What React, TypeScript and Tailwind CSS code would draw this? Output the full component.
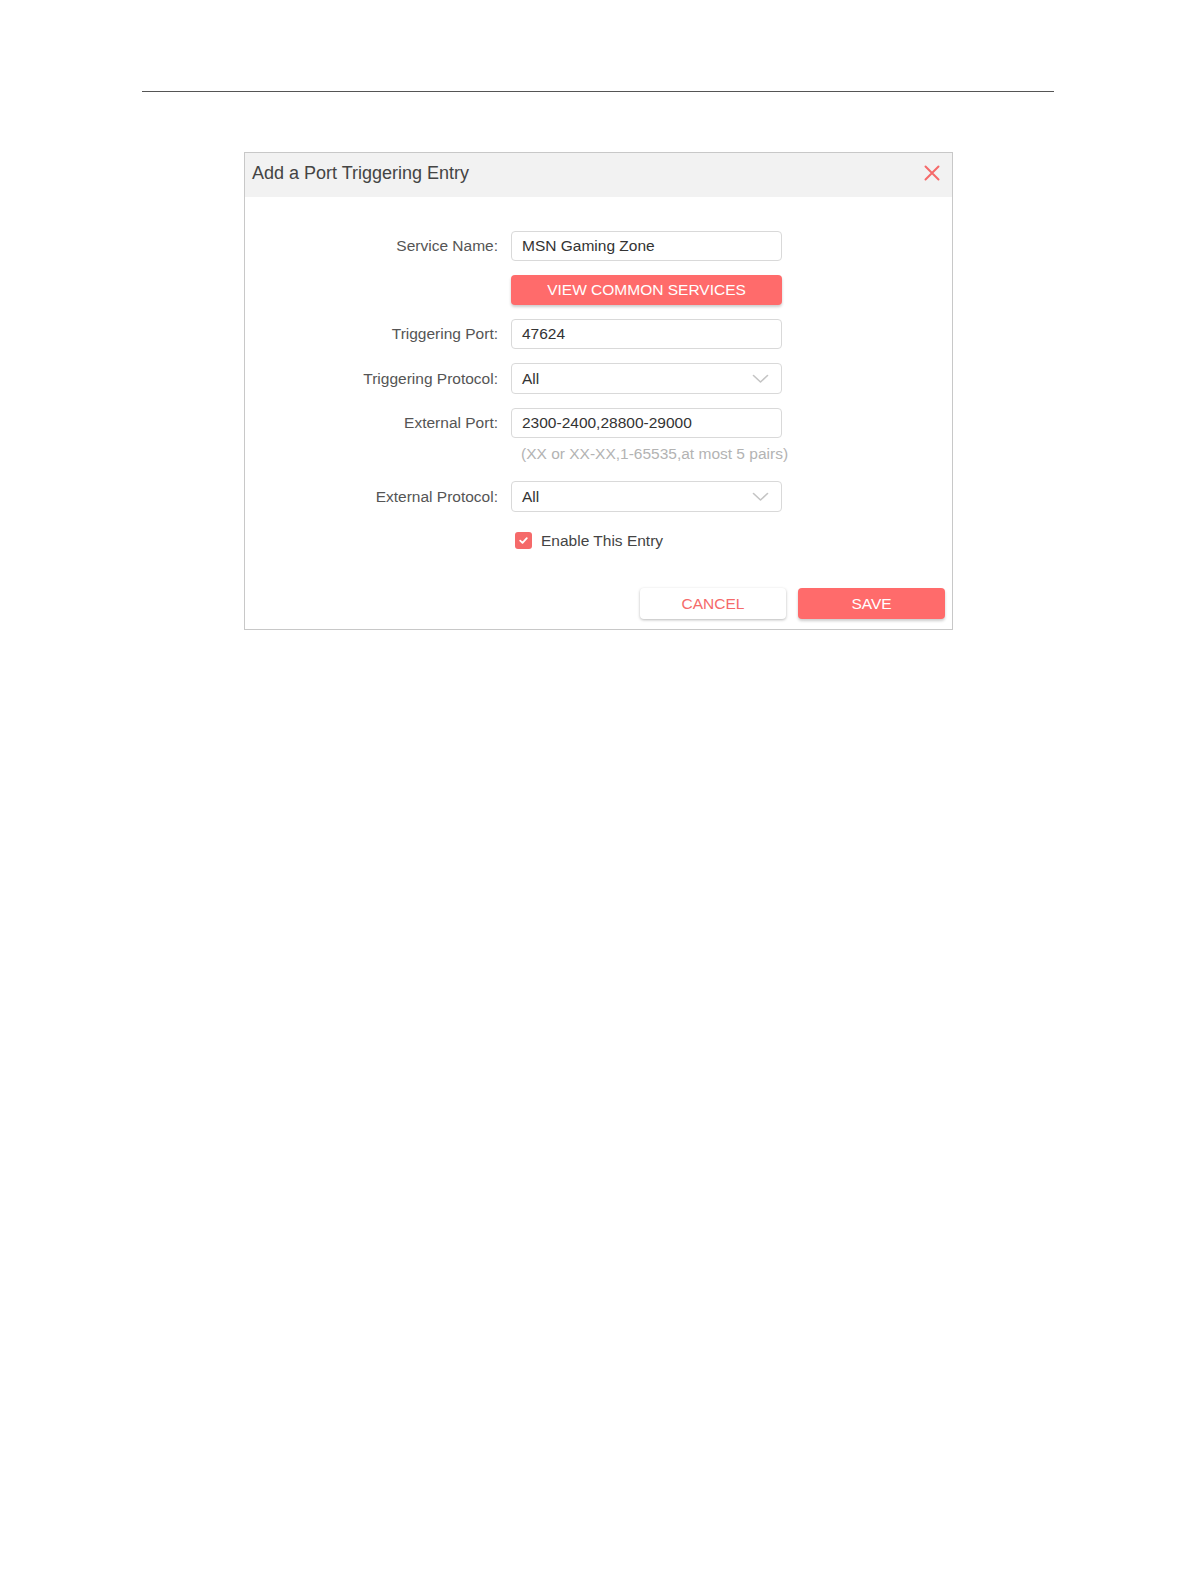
import React from "react";

const font = { fontFamily: '"Liberation Sans", Arial, sans-serif' };

function Chevron() {
  return (
    <svg width="17" height="10" viewBox="0 0 17 10" fill="none" className="shrink-0">
      <path d="M1.5 1.5 L8.5 8 L15.5 1.5" stroke="#c4c4c4" strokeWidth="1.6" strokeLinecap="round" strokeLinejoin="round" />
    </svg>
  );
}

function Row({ label, children }: { label?: string; children: React.ReactNode }) {
  return (
    <div className="flex items-center">
      <div className="w-[266px] shrink-0 pr-[13px] text-right text-[15.5px] text-[#555]">{label}</div>
      <div className="w-[271px]">{children}</div>
    </div>
  );
}

function TextBox({ value }: { value: string }) {
  return (
    <div className="flex h-[30px] items-center rounded-[4px] border border-[#d9d9d9] bg-white px-[10px] text-[15.5px] text-[#333]">
      {value}
    </div>
  );
}

function SelectBox({ value }: { value: string }) {
  return (
    <div className="flex h-[31px] items-center justify-between rounded-[4px] border border-[#d9d9d9] bg-white pl-[10px] pr-[12px] text-[15.5px] text-[#333]">
      <span>{value}</span>
      <Chevron />
    </div>
  );
}

export default function App() {
  return (
    <div className="min-h-[1582px] bg-white" style={font}>
      <div className="pt-[91px]">
        <div className="ml-[142px] h-px w-[912px] bg-[#555]" />
      </div>

      <div className="ml-[244px] mt-[60px] w-[709px] border border-[#c8c8c8] bg-white">
        <div className="flex h-[44px] items-center justify-between bg-[#f2f2f2] pb-[4px] pl-[7px] pr-[12px]">
          <span className="text-[18px] text-[#444]">Add a Port Triggering Entry</span>
          <svg width="16" height="16" viewBox="0 0 16 16">
            <path d="M1.5 1.5 L14.5 14.5 M14.5 1.5 L1.5 14.5" stroke="#f56a6a" strokeWidth="2" strokeLinecap="round" />
          </svg>
        </div>

        <div className="pt-[34px]">
          <div className="flex flex-col gap-[14px]">
            <Row label="Service Name:">
              <TextBox value="MSN Gaming Zone" />
            </Row>
            <Row>
              <button className="flex h-[30px] w-full items-center justify-center rounded-[4px] bg-[#ff6b6b] text-[15.5px] text-white shadow-[0_2px_3px_rgba(0,0,0,0.2)]">
                VIEW COMMON SERVICES
              </button>
            </Row>
            <Row label="Triggering Port:">
              <TextBox value="47624" />
            </Row>
            <Row label="Triggering Protocol:">
              <SelectBox value="All" />
            </Row>
            <Row label="External Port:">
              <TextBox value="2300-2400,28800-29000" />
            </Row>
          </div>

          <div className="ml-[266px] mt-[6px] h-[20px] whitespace-nowrap pl-[10px] text-[15.5px] leading-[20px] text-[#b3b3b3]">
            (XX or XX-XX,1-65535,at most 5 pairs)
          </div>

          <div className="mt-[17px]">
            <Row label="External Protocol:">
              <SelectBox value="All" />
            </Row>
          </div>

          <div className="ml-[270px] mt-[17px] flex items-center gap-[9px]">
            <span className="flex h-[17px] w-[17px] items-center justify-center rounded-[3px] bg-[#f56a6a]">
              <svg width="11" height="11" viewBox="0 0 11 11">
                <path d="M2.2 5.6 L4.5 7.8 L8.8 3.2" stroke="white" strokeWidth="1.8" fill="none" strokeLinecap="round" strokeLinejoin="round" />
              </svg>
            </span>
            <span className="text-[15.5px] text-[#444]">Enable This Entry</span>
          </div>

          <div className="mt-[36px] flex justify-end gap-[12px] pb-[10px] pr-[7px]">
            <button className="h-[31px] w-[146px] rounded-[4px] bg-white text-[15.5px] text-[#f56a6a] shadow-[0_1px_3px_rgba(0,0,0,0.28)]">
              CANCEL
            </button>
            <button className="h-[31px] w-[147px] rounded-[4px] bg-[#ff6b6b] text-[15.5px] text-white shadow-[0_2px_3px_rgba(0,0,0,0.2)]">
              SAVE
            </button>
          </div>
        </div>
      </div>
    </div>
  );
}
